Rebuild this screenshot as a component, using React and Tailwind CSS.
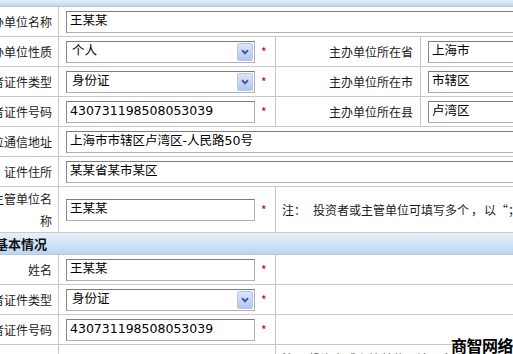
import React from "react";

const CJK = "font-['Noto_Sans_CJK_SC','Noto_Sans',sans-serif]";

function Label({ children, className = "" }) {
  return (
    <div
      className={`flex w-[89px] shrink-0 items-center justify-end overflow-hidden whitespace-nowrap border-r border-[#c8c8c8] pr-[6px] text-[12px] text-[#1c1c1c] ${className}`}
    >
      {children}
    </div>
  );
}

function Star() {
  return <span className="ml-[6px] text-[12px] leading-none text-[#b80000]">*</span>;
}

function TextBox({ value, className = "w-[189px]" }) {
  return (
    <div
      className={`flex h-[22px] shrink-0 items-center border border-[#b0b0b0] border-l-[#8a8a8a] border-t-[#7c7c7c] bg-white pl-[3px] font-['DejaVu_Sans','Noto_Sans_CJK_SC',sans-serif] text-[12.5px] whitespace-nowrap text-black ${className}`}
    >
      {value}
    </div>
  );
}

function SelectBox({ value }) {
  return (
    <div className="flex h-[22px] w-[189px] shrink-0 items-center justify-between border border-[#b0b0b0] border-l-[#8a8a8a] border-t-[#7c7c7c] bg-white pl-[5px] pr-px font-['DejaVu_Sans','Noto_Sans_CJK_SC',sans-serif] text-[12.5px] text-black">
      <span>{value}</span>
      <span className="flex h-[18px] w-[16px] items-center justify-center rounded-[2px] border border-[#b3c6f2] bg-linear-to-b from-[#dbe5fd] to-[#b3c6f4]">
        <svg width="8" height="6" viewBox="0 0 8 6">
          <path d="M1 1.2 L4 4.3 L7 1.2" fill="none" stroke="#4a5f8c" strokeWidth="2" />
        </svg>
      </span>
    </div>
  );
}

function InputCell({ children }) {
  return (
    <div className="flex w-[217px] shrink-0 items-center border-r border-[#c8c8c8] pl-[7px]">
      {children}
    </div>
  );
}

function Row({ children, className = "h-[30px]" }) {
  return <div className={`flex border-b border-[#c8c8c8] ${className}`}>{children}</div>;
}

export default function App() {
  return (
    <div className={`relative h-[354px] w-[513px] overflow-hidden bg-white ${CJK}`}>
      <div className="-ml-[30px] w-[660px]">
        <div className="h-[7px] border-b border-[#b9c9d8] bg-linear-to-b from-[#e3effb] to-[#bdd8f1]" />

        <Row>
          <Label>主办单位名称</Label>
          <div className="flex flex-1 items-center pl-[7px]">
            <TextBox value="王某某" className="w-[520px]" />
          </div>
        </Row>

        <Row>
          <Label>主办单位性质</Label>
          <InputCell>
            <SelectBox value="个人" />
            <Star />
          </InputCell>
          <Label className="w-[145px] pr-[7px]">主办单位所在省</Label>
          <div className="flex flex-1 items-center pl-[7px]">
            <TextBox value="上海市" className="w-[200px]" />
          </div>
        </Row>

        <Row>
          <Label>投资者证件类型</Label>
          <InputCell>
            <SelectBox value="身份证" />
            <Star />
          </InputCell>
          <Label className="w-[145px] pr-[7px]">主办单位所在市</Label>
          <div className="flex flex-1 items-center pl-[7px]">
            <TextBox value="市辖区" className="w-[200px]" />
          </div>
        </Row>

        <Row>
          <Label>投资者证件号码</Label>
          <InputCell>
            <TextBox value="430731198508053039" />
            <Star />
          </InputCell>
          <Label className="w-[145px] pr-[7px]">主办单位所在县</Label>
          <div className="flex flex-1 items-center pl-[7px]">
            <TextBox value="卢湾区" className="w-[200px]" />
          </div>
        </Row>

        <Row>
          <Label>主办单位通信地址</Label>
          <div className="flex flex-1 items-center pl-[7px]">
            <TextBox value="上海市市辖区卢湾区-人民路50号" className="w-[520px]" />
          </div>
        </Row>

        <Row>
          <Label>证件住所</Label>
          <div className="flex flex-1 items-center pl-[7px]">
            <TextBox value="某某省某市某区" className="w-[520px]" />
          </div>
        </Row>

        <Row className="h-[46px]">
          <Label className="leading-[22px]">
            <div className="text-right">
              主管单位名
              <br />称
            </div>
          </Label>
          <InputCell>
            <TextBox value="王某某" />
            <Star />
          </InputCell>
          <div className="flex flex-1 items-center whitespace-nowrap pl-[6px] text-[12px] text-[#1c1c1c]">
            <span>注：</span>
            <span className="ml-[7px]">投资者或主管单位可填写多个</span>
            <span className="ml-[2px]">，</span>
            <span className="ml-[1px]">以“；”隔开</span>
          </div>
        </Row>

        <div className="flex h-[22px] items-center border-b border-[#b9c9d8] bg-linear-to-b from-[#e6f1fb] to-[#b9d6f1] pl-[25px] text-[13px] font-bold text-[#111]">
          基本情况
        </div>

        <Row>
          <Label>姓名</Label>
          <InputCell>
            <TextBox value="王某某" />
            <Star />
          </InputCell>
          <div className="flex-1" />
        </Row>

        <Row>
          <Label>投资者证件类型</Label>
          <InputCell>
            <SelectBox value="身份证" />
            <Star />
          </InputCell>
          <div className="flex-1" />
        </Row>

        <Row>
          <Label>投资者证件号码</Label>
          <InputCell>
            <TextBox value="430731198508053039" />
            <Star />
          </InputCell>
          <div className="flex-1" />
        </Row>

        <Row className="h-[40px]">
          <Label />
          <div className="w-[217px] shrink-0 border-r border-[#c8c8c8]" />
          <div className="flex-1 whitespace-nowrap pl-[6px] pt-[5px] text-[12px] text-[#555]">
            注： 投资者或主管单位可填写多个，以“；”隔开
          </div>
        </Row>
      </div>

      <div className="absolute bottom-[-3px] right-0 text-[16px] font-bold tracking-[-0.5px] text-black [text-shadow:0_0_2px_#fff,0_0_2px_#fff]">
        商智网络
      </div>
    </div>
  );
}
